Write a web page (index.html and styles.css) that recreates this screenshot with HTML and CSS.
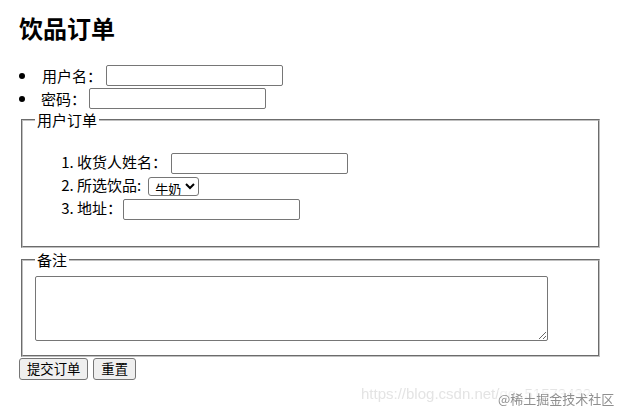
FILE: index.html
```html
<!DOCTYPE html>
<html lang="zh-CN">
<head>
<meta charset="utf-8">
<title>饮品订单</title>
<link rel="stylesheet" href="styles.css">
</head>
<body>
<h1 class="title">饮品订单</h1>
<form class="order-form">
  <ul class="login-list">
    <li class="login-item"><label>用户名：</label><input class="text-input" type="text"></li>
    <li class="login-item login-item--tight"><label>密码：</label><input class="text-input" type="password"></li>
  </ul>
  <fieldset class="group group--order">
    <legend class="group-legend">用户订单</legend>
    <ol class="order-list">
      <li class="order-item"><label>收货人姓名：</label><input class="text-input" type="text"></li>
      <li class="order-item order-item--select"><label>所选饮品:</label><select class="drink-select"><option>牛奶</option><option>咖啡</option><option>果汁</option></select></li>
      <li class="order-item order-item--tight"><label>地址：</label><input class="text-input" type="text"></li>
    </ol>
  </fieldset>
  <fieldset class="group group--note">
    <legend class="group-legend">备注</legend>
    <textarea class="note-area"></textarea>
  </fieldset>
  <div class="actions">
    <button class="btn" type="submit">提交订单</button>
    <button class="btn" type="reset">重置</button>
  </div>
</form>
<div class="watermark">
  <span class="wm-url">https://blog.csdn.net/qq_51573432</span>
  <span class="wm-brand">@稀土掘金技术社区</span>
</div>
</body>
</html>
```
FILE: styles.css
```css
html, body {
  height: 100%;
}
body {
  margin: 0 16px 0 19px;
  font-family: "Noto Sans CJK SC", "Noto Sans", sans-serif;
  font-size: 15px;
  color: #000;
  background: #fff;
  overflow: hidden;
}
.title {
  margin: 14px 0 22px;
  font-size: 24px;
  line-height: 28px;
  font-weight: 700;
}
.order-form {
  margin: 0;
}
.login-list {
  list-style: none;
  margin: 0;
  padding: 0;
}
.login-item {
  height: 23px;
  display: flex;
  align-items: center;
  gap: 4px;
}
.login-item::before {
  content: "";
  width: 6px;
  height: 6px;
  border-radius: 50%;
  background: #000;
  margin-right: 13px;
}
.login-item--tight {
  gap: 3px;
}
.text-input {
  box-sizing: border-box;
  width: 177px;
  height: 21px;
  margin: 0;
  padding: 1px 2px;
  border: 1px solid #767676;
  border-radius: 2px;
  font-size: 13px;
  background: #fff;
}
.group {
  margin: 0 2px;
  border: 2px groove #c0c0c0;
  padding: 5px 12px 10px;
}
.group-legend {
  padding: 0 2px;
  line-height: 20px;
}
.order-list {
  margin: 15px 0 17px;
  padding-left: 42px;
}
.order-item {
  display: list-item;
  height: 23px;
  line-height: 23px;
}
.order-item label {
  margin-right: 4px;
}
.order-item--select label {
  margin-right: 7px;
}
.order-item--tight label {
  margin-right: 1px;
}
.order-item .text-input,
.order-item .drink-select {
  vertical-align: middle;
}
.drink-select {
  box-sizing: border-box;
  width: 51px;
  height: 19px;
  margin: 0;
  padding: 0 0 0 2px;
  border: 1px solid #767676;
  border-radius: 3px;
  font-size: 13px;
  font-family: "Noto Sans CJK SC", sans-serif;
  background: #fff;
  color: #000;
}
.group--note {
  margin-top: 2px;
  padding: 6px 12px 14px;
}
.note-area {
  display: block;
  box-sizing: border-box;
  width: 513px;
  height: 65px;
  margin: 0;
  border: 1px solid #767676;
  border-radius: 2px;
  font-size: 13px;
}
.actions {
  display: flex;
  gap: 5px;
  margin-top: 1px;
}
.btn {
  box-sizing: border-box;
  height: 22px;
  margin: 0;
  padding: 0 7px;
  border: 1px solid #767676;
  border-radius: 3px;
  background: #efefef;
  font-family: "Noto Sans CJK SC", sans-serif;
  font-size: 13.33px;
  line-height: 18px;
  color: #000;
}
.watermark {
  position: fixed;
  left: 361px;
  top: 382px;
  width: 257px;
  height: 27px;
}
.wm-url {
  position: absolute;
  left: 0;
  top: 3px;
  font-family: "Liberation Sans", Arial, sans-serif;
  font-size: 15px;
  color: #e4e4e4;
  white-space: nowrap;
}
.wm-brand {
  position: absolute;
  left: 137px;
  top: 8px;
  font-family: "Noto Sans CJK SC", sans-serif;
  font-size: 13px;
  line-height: 18px;
  color: #8f8f8f;
  background: rgba(255, 255, 255, 0.55);
  white-space: nowrap;
}
```
